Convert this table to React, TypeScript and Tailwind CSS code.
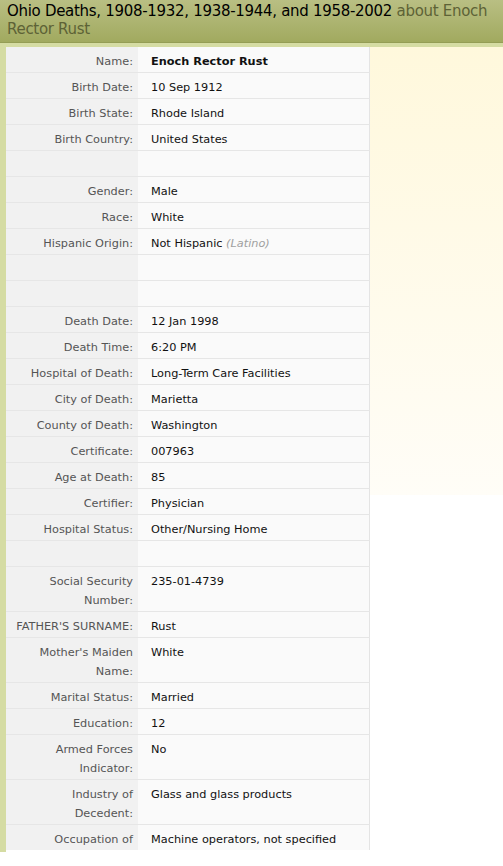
import React from 'react';

type Row = { label?: React.ReactNode; value?: React.ReactNode };

const rows: Row[] = [
    { label: 'Name:', value: <span className="font-bold">Enoch Rector Rust</span> },
    { label: 'Birth Date:', value: '10 Sep 1912' },
    { label: 'Birth State:', value: 'Rhode Island' },
    { label: 'Birth Country:', value: 'United States' },
    {},
    { label: 'Gender:', value: 'Male' },
    { label: 'Race:', value: 'White' },
    {
        label: 'Hispanic Origin:',
        value: (
            <>
                Not Hispanic <span className="italic text-[#a0a0a0]">(Latino)</span>
            </>
        ),
    },
    {},
    {},
    { label: 'Death Date:', value: '12 Jan 1998' },
    { label: 'Death Time:', value: '6:20 PM' },
    { label: 'Hospital of Death:', value: 'Long-Term Care Facilities' },
    { label: 'City of Death:', value: 'Marietta' },
    { label: 'County of Death:', value: 'Washington' },
    { label: 'Certificate:', value: '007963' },
    { label: 'Age at Death:', value: '85' },
    { label: 'Certifier:', value: 'Physician' },
    { label: 'Hospital Status:', value: 'Other/Nursing Home' },
    {},
    { label: <>Social Security<br />Number:</>, value: '235-01-4739' },
    { label: "FATHER'S SURNAME:", value: 'Rust' },
    { label: <>Mother's Maiden<br />Name:</>, value: 'White' },
    { label: 'Marital Status:', value: 'Married' },
    { label: 'Education:', value: '12' },
    { label: <>Armed Forces<br />Indicator:</>, value: 'No' },
    { label: <>Industry of<br />Decedent:</>, value: 'Glass and glass products' },
    { label: 'Occupation of', value: 'Machine operators, not specified' },
];

const App: React.FC = () => {
    return (
        <div className="w-[503px] h-[866px] overflow-hidden bg-white font-['DejaVu_Sans',sans-serif]">
            {/* title bar */}
            <div className="h-[42px] bg-gradient-to-b from-[#b9bf83] to-[#a1aa5f] px-[7px] pt-[2px] text-[15px] leading-[18px] text-black tracking-[-0.3px]">
                <div className="whitespace-nowrap">
                    Ohio Deaths, 1908-1932, 1938-1944, and 1958-2002{' '}
                    <span className="text-[#5d6236]">about Enoch</span>
                </div>
                <div className="text-[#5d6236]">Rector Rust</div>
            </div>
            <div className="h-px bg-[#949d55]" />
            <div className="h-[4px] bg-[#d5dca3]" />

            <div className="flex">
                <div className="w-[370px] border-l-[6px] border-[#d5dca3] h-[805px] overflow-hidden">
                    <div className="flex flex-col text-[11.3px] leading-[19px]">
                        {rows.map((r, i) => (
                            <div key={i} className="flex border-b border-[#e6e6e6] last:border-b-0">
                                <div className="w-[132px] shrink-0 bg-[#f1f1f1] text-right text-[#555] pr-[5px] pt-[5px] pb-[1px] min-h-[25px]">
                                    {r.label}
                                </div>
                                <div className="flex-1 bg-[#fafafa] border-r border-[#e4e4e4] text-[#111] pl-[13px] pt-[5px] pb-[1px]">
                                    {r.value}
                                </div>
                            </div>
                        ))}
                    </div>
                </div>
                <div className="flex-1 h-[448px] bg-gradient-to-b from-[#fff8dc] to-[#fffdf7]" />
            </div>
        </div>
    );
};

export default App;
